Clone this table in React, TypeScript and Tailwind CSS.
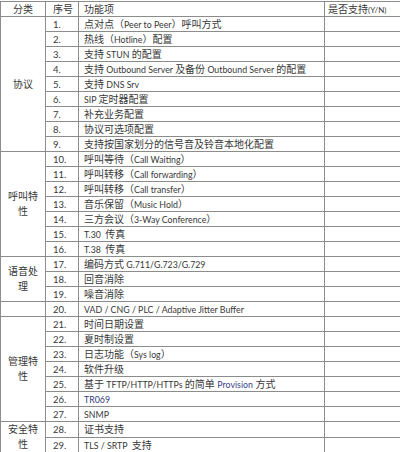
import type { ReactNode } from "react"

const font = { fontFamily: "Lato, 'Noto Sans CJK SC', sans-serif" }

// Latin runs are drawn a bit smaller so they keep the narrow look of the original
function mix(s: string, latinClass = "") {
  return s.split(/([\x00-\x7F\u00a0]+)/).map((part, i) =>
    /[\x00-\x7F\u00a0]/.test(part) && part.trim() !== "" ? (
      <span key={i} className={`text-[8.8px] leading-none ${latinClass}`}>
        {part}
      </span>
    ) : (
      <span key={i}>{part}</span>
    )
  )
}

type Row = { no: number; text: ReactNode }

const groups: { name: string; rows: Row[] }[] = [
  {
    name: "协议",
    rows: [
      { no: 1, text: mix("点对点（Peer to Peer）呼叫方式") },
      { no: 2, text: mix("热线（Hotline）配置") },
      { no: 3, text: mix("支持 STUN 的配置") },
      { no: 4, text: mix("支持 Outbound Server 及备份 Outbound Server 的配置") },
      { no: 5, text: mix("支持 DNS Srv") },
      { no: 6, text: mix("SIP 定时器配置") },
      { no: 7, text: "补充业务配置" },
      { no: 8, text: "协议可选项配置" },
      { no: 9, text: "支持按国家划分的信号音及铃音本地化配置" },
    ],
  },
  {
    name: "呼叫特性",
    rows: [
      { no: 10, text: mix("呼叫等待（Call Waiting）") },
      { no: 11, text: mix("呼叫转移（Call forwarding）") },
      { no: 12, text: mix("呼叫转移（Call transfer）") },
      { no: 13, text: mix("音乐保留（Music Hold）") },
      { no: 14, text: mix("三方会议（3-Way Conference）") },
      { no: 15, text: mix("T.30\u00a0\u00a0传真") },
      { no: 16, text: mix("T.38\u00a0\u00a0传真") },
    ],
  },
  {
    name: "语音处理",
    rows: [
      { no: 17, text: mix("编码方式 G.711/G.723/G.729") },
      { no: 18, text: "回音消除" },
      { no: 19, text: "噪音消除" },
    ],
  },
  {
    name: "",
    rows: [{ no: 20, text: mix("VAD / CNG / PLC / Adaptive Jitter Buffer") }],
  },
  {
    name: "管理特性",
    rows: [
      { no: 21, text: "时间日期设置" },
      { no: 22, text: "夏时制设置" },
      { no: 23, text: mix("日志功能（Sys log）") },
      { no: 24, text: "软件升级" },
      {
        no: 25,
        text: (
          <>
            {mix("基于 TFTP/HTTP/HTTPs 的简单 ")}
            {mix("Provision", "text-[#3a3f8c]")}
            {mix(" 方式")}
          </>
        ),
      },
      { no: 26, text: mix("TR069", "text-[#33407a]") },
      { no: 27, text: mix("SNMP") },
    ],
  },
  {
    name: "安全特性",
    rows: [
      { no: 28, text: "证书支持" },
      { no: 29, text: mix("TLS / SRTP\u00a0\u00a0支持") },
    ],
  },
]

const cell = "border border-[#8c8c8c] p-0 h-[15px] leading-[14px] whitespace-nowrap"

export default function App() {
  return (
    <div className="w-[400px] h-[452px] bg-white pt-px text-[10px] text-[#383838]" style={font}>
      <table className="table-fixed border-collapse w-[400px]">
        <colgroup>
          <col className="w-[45px]" />
          <col className="w-[33px]" />
          <col className="w-[246px]" />
          <col className="w-[76px]" />
        </colgroup>
        <thead>
          <tr>
            <th className={`${cell} font-normal text-center`}>分类</th>
            <th className={`${cell} font-normal text-left pl-[7px]`}>序号</th>
            <th className={`${cell} font-normal text-left pl-[5px]`}>功能项</th>
            <th className={`${cell} font-normal text-left pl-[3px]`}>
              是否支持<span className="text-[8px] leading-none">(Y/N)</span>
            </th>
          </tr>
        </thead>
        <tbody>
          {groups.map((g) =>
            g.rows.map((r, i) => (
              <tr key={r.no}>
                {i === 0 && (
                  <td
                    rowSpan={g.rows.length}
                    className="border border-[#8c8c8c] p-0 px-[7px] text-center leading-[15px] break-all"
                  >
                    {g.name}
                  </td>
                )}
                <td className={`${cell} pl-[7px]`}>
                  <span className="text-[9.5px] leading-none">{r.no}.</span>
                </td>
                <td className={`${cell} pl-[5px]`}>{r.text}</td>
                <td className={cell}></td>
              </tr>
            ))
          )}
        </tbody>
      </table>
    </div>
  )
}
